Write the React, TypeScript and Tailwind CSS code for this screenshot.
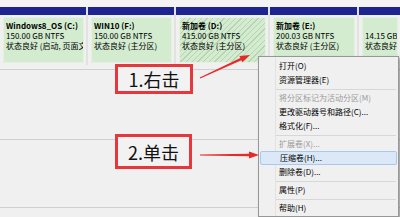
import React from 'react';

type Disk = {
  title: string;
  size: string;
  status: string;
  width: string;
  hatched?: boolean;
};

const disks: Disk[] = [
  { title: 'Windows8_OS  (C:)', size: '150.00 GB NTFS', status: '状态良好 (启动, 页面文', width: 'w-[86px]' },
  { title: 'WIN10  (F:)', size: '150.00 GB NTFS', status: '状态良好 (主分区)', width: 'w-[86px]' },
  { title: '新加卷  (D:)', size: '415.00 GB NTFS', status: '状态良好 (主分区)', width: 'w-[92px]', hatched: true },
  { title: '新加卷  (E:)', size: '200.03 GB NTFS', status: '状态良好 (主分区)', width: 'w-[87px]' },
  { title: '', size: '14.15 GB', status: '状态良好 (', width: 'flex-1' },
];

type MenuEntry = { label: string; disabled?: boolean; active?: boolean } | 'sep';

const menu: MenuEntry[] = [
  { label: '打开(O)' },
  { label: '资源管理器(E)' },
  'sep',
  { label: '将分区标记为活动分区(M)', disabled: true },
  { label: '更改驱动器号和路径(C)...' },
  { label: '格式化(F)...' },
  'sep',
  { label: '扩展卷(X)...', disabled: true },
  { label: '压缩卷(H)...', active: true },
  { label: '删除卷(D)...' },
  'sep',
  { label: '属性(P)' },
  'sep',
  { label: '帮助(H)' },
];

const DiskCell = ({ disk }: { disk: Disk }) => (
  <div className={`${disk.width} flex flex-col bg-[#f0f0f0] min-w-0`}>
    <div className="h-[8px] bg-[#1b2490]" />
    <div className="p-[2px] pl-[3px]">
      <div
        className={`h-[46px] border border-[#e4f1e1] px-[2px] pt-[3px] overflow-hidden whitespace-nowrap text-[8px] leading-[10px] text-black ${
          disk.hatched
            ? 'bg-[repeating-linear-gradient(135deg,#d3eccf_0px,#d3eccf_3px,#b7d3b1_3px,#b7d3b1_4px)]'
            : 'bg-[#d3eccf]'
        }`}
      >
        <div className="font-bold h-[10px]">{disk.title}</div>
        <div>{disk.size}</div>
        <div>{disk.status}</div>
      </div>
    </div>
  </div>
);

export default function App() {
  return (
    <div
      className="relative w-[400px] h-[217px] overflow-hidden bg-[#f0f0f0]"
      style={{ fontFamily: '"Noto Sans CJK SC", "Liberation Sans", sans-serif' }}
    >
      {/* disk strip */}
      <div className="h-[7px] bg-[#f4f4f4]" />
      <div className="flex gap-[2px] bg-[#e2e2e2]">
        {disks.map((d, i) => (
          <DiskCell key={i} disk={d} />
        ))}
      </div>

      {/* list rows */}
      <div className="h-[4px]" />
      <div className="border-t border-[#cfcfcf] h-[70px]" />
      <div className="border-t border-[#cfcfcf] h-[68px]" />
      <div className="border-t border-[#cfcfcf] h-[12px]" />

      {/* annotation boxes */}
      <div className="absolute left-[115px] top-[64px] w-[78px] h-[30px] border-[3px] border-[#e8373c] bg-[#f2f2f2] flex items-center justify-center text-[18px] leading-none text-[#111]">
        1.右击
      </div>
      <div className="absolute left-[115px] top-[134px] w-[77px] h-[35px] border-[3px] border-[#e8373c] bg-[#f2f2f2] flex items-center justify-center text-[18px] leading-none text-[#111]">
        2.单击
      </div>

      {/* context menu */}
      <div className="absolute left-[258px] top-[56px] w-[141px] pt-[2px] pb-[1px] bg-[#f0f0f0] border border-[#979797] shadow-[2px_2px_3px_rgba(0,0,0,0.35)]">
        <div className="absolute left-[16px] top-0 bottom-0 w-px bg-[#e2e2e2]" />
        {menu.map((m, i) =>
          m === 'sep' ? (
            <div key={i} className="h-[4px] flex items-center pl-[17px] pr-[2px]">
              <div className="h-px w-full bg-[#d7d7d7]" />
            </div>
          ) : (
            <div
              key={i}
              className={`relative h-[14px] mx-[1px] flex items-center pl-[19px] text-[8px] whitespace-nowrap ${
                m.active ? 'bg-[#dbe8f7] border border-[#a9c8ee] rounded-[2px] pl-[18px]' : ''
              } ${m.disabled ? 'text-[#9b9b9b]' : 'text-black'}`}
            >
              {m.label}
            </div>
          )
        )}
      </div>

      {/* arrows */}
      <svg className="absolute inset-0 pointer-events-none" width="400" height="217" viewBox="0 0 400 217">
        <g transform="translate(200,78) rotate(-24.7)">
          <polygon points="0,-0.5 45,-1.2 45,-3.4 55,0 45,3.4 45,1.2 0,0.5" fill="#e8282b" />
        </g>
        <g transform="translate(200,155)">
          <polygon points="0,-0.5 49,-1.2 49,-3.4 59,0 49,3.4 49,1.2 0,0.5" fill="#e8282b" />
        </g>
      </svg>
    </div>
  );
}
